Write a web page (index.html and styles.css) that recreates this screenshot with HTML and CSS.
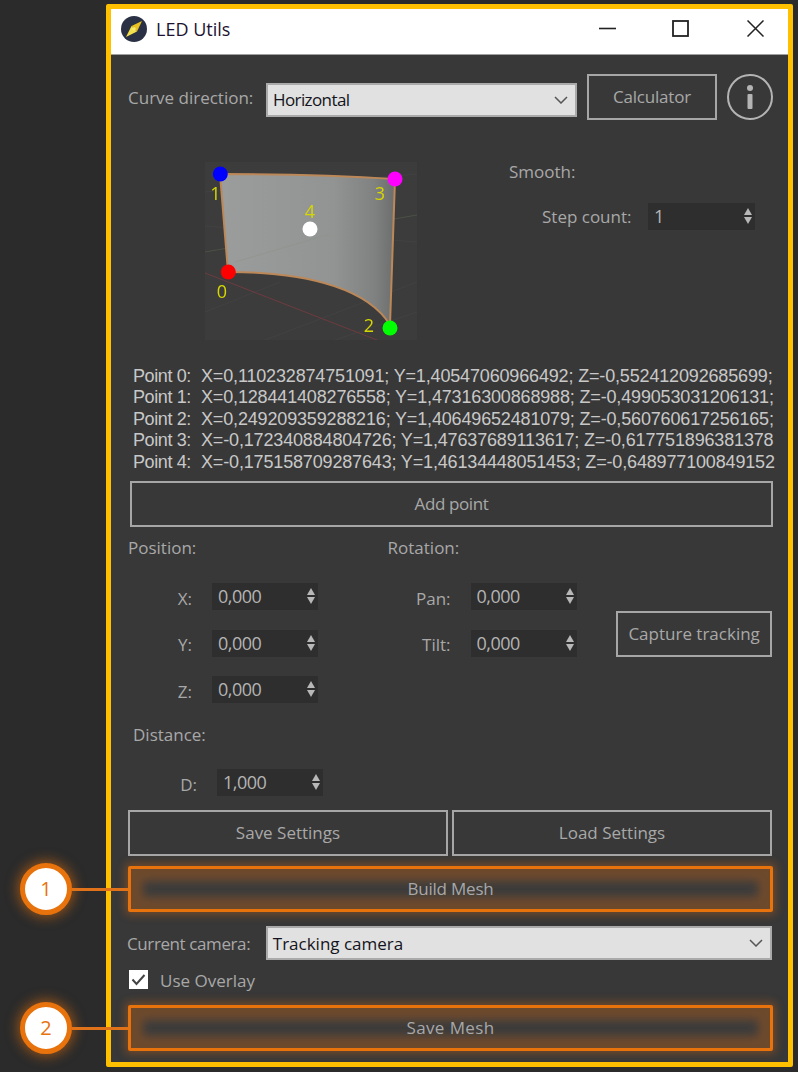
FILE: index.html
```html
<!DOCTYPE html>
<html lang="en">
<head>
    <meta charset="UTF-8">
    <meta name="viewport" content="width=device-width, initial-scale=1.0">
    <title>LED Utils</title>
    <link rel="stylesheet" href="styles.css">
</head>
<body>
    <div class="window">
        <!-- Title bar -->
        <div class="titlebar">
            <svg class="app-icon" viewBox="0 0 26 26">
                <circle cx="13" cy="13" r="13" fill="#2b3145"/>
                <path d="M21 5 L16 15.5 L10.5 10 Z" fill="#e8c020"/>
                <path d="M5 21 L10.5 10 L16 15.5 Z" fill="#f4e04a"/>
                <circle cx="13" cy="13" r="1.8" fill="#f8ec70"/>
            </svg>
            <span class="app-title">LED Utils</span>
            <svg class="win-btn win-min" viewBox="0 0 17 17"><path d="M0 8.5H17" stroke="#222" stroke-width="1.6"/></svg>
            <svg class="win-btn win-max" viewBox="0 0 17 17"><rect x="1" y="1" width="15" height="15" fill="none" stroke="#222" stroke-width="1.8"/></svg>
            <svg class="win-btn win-close" viewBox="0 0 17 17"><path d="M0.5 0.5L16.5 16.5M16.5 0.5L0.5 16.5" stroke="#222" stroke-width="1.5"/></svg>
        </div>

        <div class="panel">
            <div class="top-row">
                <span class="label curve-label">Curve direction:</span>
                <div class="combo curve-combo">
                    <span>Horizontal</span>
                    <svg class="chevron" viewBox="0 0 14 8"><path d="M1 1L7 7L13 1" fill="none" stroke="#555" stroke-width="1.5"/></svg>
                </div>
                <button class="btn calc-btn">Calculator</button>
                <svg class="info-icon" viewBox="0 0 46 46">
                    <circle cx="23" cy="23" r="22" fill="none" stroke="#b4b4b4" stroke-width="2"/>
                    <circle cx="23" cy="14" r="3" fill="#b4b4b4"/>
                    <rect x="20.5" y="20" width="5" height="15" rx="1" fill="#b4b4b4"/>
                </svg>
            </div>

            <div class="preview-row">
                <svg class="preview" viewBox="0 0 212 178">
                    <defs>
                        <linearGradient id="surface" x1="0" x2="1" y1="0" y2="0">
                            <stop offset="0" stop-color="#9b9d9d"/>
                            <stop offset="0.65" stop-color="#929494"/>
                            <stop offset="0.88" stop-color="#808282"/>
                            <stop offset="1" stop-color="#6c6e6e"/>
                        </linearGradient>
                    </defs>
                    <rect width="212" height="178" fill="#3c3c3c"/>
                    <path d="M0 150L75 120M60 178L212 120M0 64L212 80M130 178L212 150M0 30L212 12" stroke="#424242" stroke-width="1" fill="none"/>
                    <path d="M0 90L212 53" stroke="#4b5245" stroke-width="1"/>
                    <path d="M0 111L172 178" stroke="#6e3b40" stroke-width="1"/>
                    <path d="M15 12C70 12 130 13 190 17L185 163C165 130 110 110 23 110Z" fill="url(#surface)" stroke="#bd8858" stroke-width="2"/>
                    <path d="M30 100L125 72" stroke="#8d9488" stroke-width="0.6"/>
                    <g class="pin-labels">
                        <text x="10.5" y="31">1</text>
                        <text x="17" y="129">0</text>
                        <text x="164" y="163">2</text>
                        <text x="175" y="31">3</text>
                        <text x="105" y="49">4</text>
                    </g>
                    <circle cx="15.3" cy="12" r="7.5" fill="#0000ff"/>
                    <circle cx="190" cy="17" r="7.5" fill="#ff00ff"/>
                    <circle cx="185" cy="166" r="7.5" fill="#00ff00"/>
                    <circle cx="23.3" cy="110" r="7.5" fill="#ff0000"/>
                    <circle cx="105" cy="67" r="7.5" fill="#ffffff"/>
                </svg>
                <div class="smooth">
                    <div class="label smooth-label">Smooth:</div>
                    <div class="step-row">
                        <span class="label step-label">Step count:</span>
                        <div class="spin step-spin"><span>1</span><span class="spin-arrows"><i class="up"></i><i class="down"></i></span></div>
                    </div>
                </div>
            </div>

            <div class="points">
                <div class="point"><span class="point-name">Point 0:</span><span>X=0,110232874751091; Y=1,40547060966492; Z=-0,552412092685699;</span></div>
                <div class="point"><span class="point-name">Point 1:</span><span>X=0,128441408276558; Y=1,47316300868988; Z=-0,499053031206131;</span></div>
                <div class="point"><span class="point-name">Point 2:</span><span>X=0,249209359288216; Y=1,40649652481079; Z=-0,560760617256165;</span></div>
                <div class="point"><span class="point-name">Point 3:</span><span>X=-0,172340884804726; Y=1,47637689113617; Z=-0,617751896381378</span></div>
                <div class="point"><span class="point-name">Point 4:</span><span>X=-0,175158709287643; Y=1,46134448051453; Z=-0,648977100849152</span></div>
            </div>

            <button class="btn add-btn">Add point</button>

            <div class="transform">
                <div class="col pos-col">
                    <div class="label col-title">Position:</div>
                    <div class="field"><span class="label">X:</span><div class="spin"><span>0,000</span><span class="spin-arrows"><i class="up"></i><i class="down"></i></span></div></div>
                    <div class="field"><span class="label">Y:</span><div class="spin"><span>0,000</span><span class="spin-arrows"><i class="up"></i><i class="down"></i></span></div></div>
                    <div class="field"><span class="label">Z:</span><div class="spin"><span>0,000</span><span class="spin-arrows"><i class="up"></i><i class="down"></i></span></div></div>
                </div>
                <div class="col rot-col">
                    <div class="label col-title">Rotation:</div>
                    <div class="field"><span class="label">Pan:</span><div class="spin"><span>0,000</span><span class="spin-arrows"><i class="up"></i><i class="down"></i></span></div></div>
                    <div class="field"><span class="label">Tilt:</span><div class="spin"><span>0,000</span><span class="spin-arrows"><i class="up"></i><i class="down"></i></span></div></div>
                </div>
                <button class="btn capture-btn">Capture tracking</button>
            </div>

            <div class="label distance-title">Distance:</div>
            <div class="field distance-field"><span class="label">D:</span><div class="spin"><span>1,000</span><span class="spin-arrows"><i class="up"></i><i class="down"></i></span></div></div>

            <div class="settings-row">
                <button class="btn">Save Settings</button>
                <button class="btn">Load Settings</button>
            </div>

            <button class="btn hot-btn build-btn">Build Mesh</button>

            <div class="camera-row">
                <span class="label camera-label">Current camera:</span>
                <div class="combo camera-combo">
                    <span>Tracking camera</span>
                    <svg class="chevron" viewBox="0 0 14 8"><path d="M1 1L7 7L13 1" fill="none" stroke="#555" stroke-width="1.5"/></svg>
                </div>
            </div>

            <div class="overlay-row">
                <svg class="checkbox" viewBox="0 0 19 19">
                    <rect width="19" height="19" fill="#fff"/>
                    <path d="M3.5 9.5L7.5 14L15.5 5" fill="none" stroke="#444" stroke-width="2"/>
                </svg>
                <span class="label">Use Overlay</span>
            </div>

            <button class="btn hot-btn save-btn">Save Mesh</button>
        </div>
    </div>

    <!-- Callouts sit over the window border -->
    <div class="callout callout-1"><span class="callout-num">1</span><span class="callout-line"></span></div>
    <div class="callout callout-2"><span class="callout-num">2</span><span class="callout-line"></span></div>
</body>
</html>
```

FILE: styles.css
```css
* {
  box-sizing: border-box;
}

body {
  margin: 0;
  height: 1072px;
  overflow: hidden;
  position: relative;
  background-color: #2b2b2b;
  font-family: "Open Sans", "Noto Sans", sans-serif;
  font-size: 17px;
  color: #a8a8a8;
}

.window {
  margin: 4px 0 0 106px;
  width: 687px;
  height: 1063px;
  border: 5px solid #ffc000;
  border-radius: 2px;
  background-color: #383838;
}

.titlebar {
  height: 46px;
  display: flex;
  align-items: center;
  background-color: #fff;
  border-bottom: 1px solid #a0a0a0;
  padding: 0 0 6px 10px;
}

.app-icon {
  width: 26px;
  height: 26px;
}

.app-title {
  margin-left: 9px;
  font-size: 18px;
  color: #1c1230;
}

.win-btn {
  width: 17px;
  height: 17px;
}

.win-min {
  margin-left: auto;
}

.win-max {
  margin-left: 56px;
}

.win-close {
  margin-left: 58px;
  margin-right: 24px;
}

.panel {
  padding: 19px 16px 0 17px;
}

.label {
  color: #a8a8a8;
  white-space: nowrap;
}

.btn {
  display: block;
  padding: 0 0 2px;
  font: inherit;
  color: #a8a8a8;
  background-color: transparent;
  border: 2px solid #a6a6a6;
}

.combo {
  display: flex;
  align-items: center;
  justify-content: space-between;
  height: 34px;
  padding: 0 7px 0 5px;
  font-size: 17px;
  color: #141420;
  background-color: #e1e1e1;
  border: 2px solid #aaa;
}

.chevron {
  width: 14px;
  height: 8px;
}

.top-row {
  display: flex;
  align-items: center;
  height: 46px;
}

.top-row > * {
  flex: none;
}

.curve-label {
  width: 138px;
  padding-top: 1px;
}

.curve-combo {
  width: 311px;
  margin-top: 5px;
  letter-spacing: -0.6px;
}

.calc-btn {
  width: 130px;
  height: 46px;
  margin-left: 10px;
  letter-spacing: -0.2px;
}

.info-icon {
  width: 46px;
  height: 46px;
  margin-left: 10px;
}

.preview-row {
  display: flex;
  margin-top: 42px;
  margin-left: 77px;
}

.preview {
  width: 212px;
  height: 178px;
  display: block;
  filter: blur(0.4px);
}

.pin-labels text {
  font-family: "Open Sans", sans-serif;
  font-size: 18px;
  fill: #d6d600;
  text-anchor: middle;
  dominant-baseline: central;
}

.smooth {
  margin-left: 92px;
}

.smooth-label {
  line-height: 20px;
}

.step-row {
  display: flex;
  align-items: center;
  margin-top: 21px;
}

.step-label {
  width: 106px;
  margin-left: 33px;
}

.spin {
  display: flex;
  align-items: center;
  justify-content: space-between;
  width: 106px;
  height: 27px;
  padding: 0 2px 1px 6px;
  font-size: 18px;
  letter-spacing: -0.5px;
  color: #b4b4b4;
  background-color: #2e2e2e;
}

.spin-arrows {
  display: flex;
  flex-direction: column;
  gap: 2px;
  width: 9px;
}

.spin-arrows i {
  display: block;
  width: 0;
  height: 0;
  border-left: 4.5px solid transparent;
  border-right: 4.5px solid transparent;
}

.spin-arrows .up {
  border-bottom: 7px solid #b8b8b8;
}

.spin-arrows .down {
  border-top: 7px solid #b8b8b8;
}

.step-spin {
  width: 107px;
}

.points {
  margin-top: 26px;
  margin-left: 5px;
  font-family: "Liberation Sans", Arial, sans-serif;
  font-size: 18px;
  line-height: 21.4px;
  color: #c8c8c8;
  white-space: nowrap;
  letter-spacing: -0.16px;
}

.point {
  display: flex;
}

.point-name {
  flex: none;
  width: 68px;
  letter-spacing: -0.4px;
}

.add-btn {
  width: 643px;
  height: 46px;
  margin: 8px 0 0 2px;
  letter-spacing: -0.4px;
}

.transform {
  display: flex;
  margin-top: 10px;
}

.col-title {
  line-height: 22px;
  margin-bottom: 24px;
}

.field {
  display: flex;
  align-items: center;
  margin-bottom: 19.5px;
}

.field .label {
  text-align: right;
  padding: 3px 20px 0 0;
}

.pos-col {
  width: 260px;
}

.pos-col .field .label {
  width: 84px;
}

.rot-col {
  width: 190px;
}

.rot-col .field .label {
  width: 83px;
}

.capture-btn {
  width: 156px;
  height: 46px;
  margin: 74px 0 0 39px;
  white-space: nowrap;
}

.distance-title {
  margin: 1.5px 0 0 5px;
  line-height: 22px;
}

.distance-field {
  margin: 23px 0 0 0;
}

.distance-field .label {
  width: 89px;
}

.settings-row {
  display: flex;
  gap: 4px;
  margin-top: 14px;
}

.settings-row .btn {
  flex: 1;
  height: 46px;
}

.hot-btn {
  width: 645px;
  height: 46px;
  border: 3px solid #e8720c;
  border-radius: 2px;
  background-color: #3c3c3c;
  box-shadow: inset 0 0 8px 12px rgba(200, 100, 20, 0.36), 0 0 8px 3px rgba(200, 100, 20, 0.4);
}

.build-btn {
  margin-top: 10px;
  letter-spacing: -0.2px;
}

.camera-row {
  display: flex;
  align-items: center;
  margin: 14px 0 0 -1px;
}

.camera-label {
  width: 139px;
  letter-spacing: -0.4px;
}

.camera-combo {
  width: 507px;
}

.overlay-row {
  display: flex;
  align-items: center;
  gap: 12px;
  height: 19px;
  margin: 10px 0 0 1px;
}

.overlay-row .label {
  padding-top: 2px;
}

.checkbox {
  width: 19px;
  height: 19px;
}

.save-btn {
  margin-top: 16px;
  letter-spacing: 0.4px;
}

.callout {
  position: absolute;
  left: 20px;
  display: flex;
  align-items: center;
  width: 108px;
}

.callout-1 {
  top: 863px;
}

.callout-2 {
  top: 1002px;
}

.callout-num {
  flex: none;
  width: 52px;
  height: 52px;
  line-height: 42px;
  text-align: center;
  font-size: 20px;
  color: #e8720c;
  background-color: #fff;
  border: 5px solid #e8720c;
  border-radius: 50%;
  box-shadow: 0 0 12px 3px rgba(232, 114, 12, 0.5);
}

.callout-line {
  flex: 1;
  height: 3px;
  background-color: #e0721a;
}
```
